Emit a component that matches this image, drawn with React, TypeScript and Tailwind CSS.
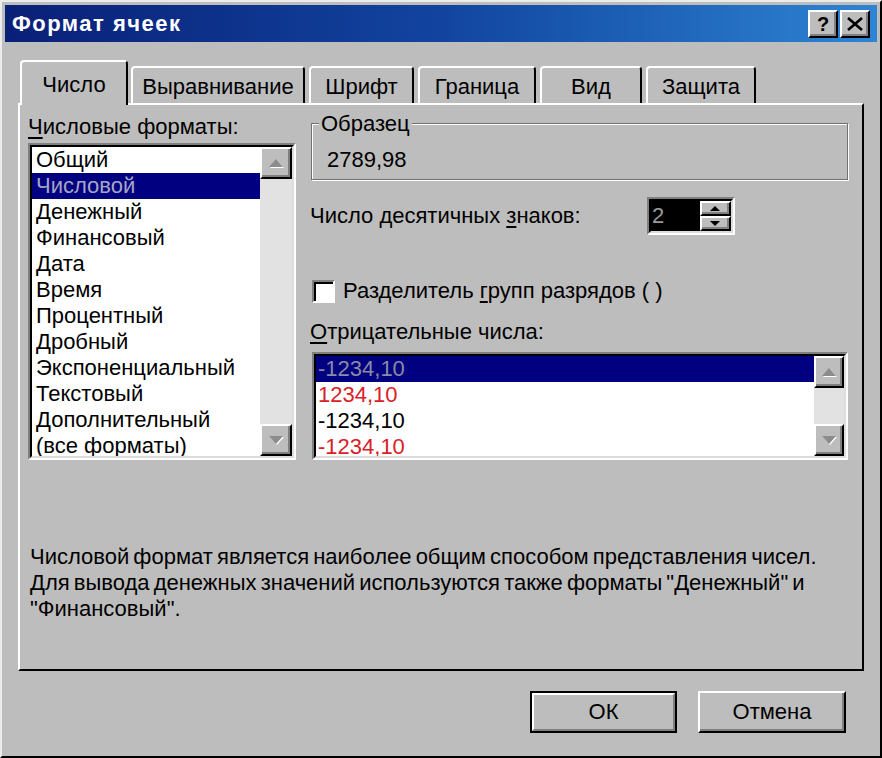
import type { ReactNode } from "react";

const raised =
  "border-2 border-t-white border-l-white border-r-black border-b-black shadow-[inset_-2px_-2px_0_#808080] bg-[#bdbdbd]";

const formats = [
  "Общий",
  "Числовой",
  "Денежный",
  "Финансовый",
  "Дата",
  "Время",
  "Процентный",
  "Дробный",
  "Экспоненциальный",
  "Текстовый",
  "Дополнительный",
  "(все форматы)",
];

const negatives = [
  { text: "-1234,10", color: "text-[#8a8aa6]", selected: true },
  { text: "1234,10", color: "text-[#d92128]" },
  { text: "-1234,10", color: "text-black" },
  { text: "-1234,10", color: "text-[#d92128]" },
];

function Arrow({ up, color = "#000", ghost = false, w = 14, h = 8 }: { up?: boolean; color?: string; ghost?: boolean; w?: number; h?: number }) {
  const pts = up ? `0,${h} ${w / 2},0 ${w},${h}` : `0,0 ${w / 2},${h} ${w},0`;
  const shadow = up ? `1,${h + 1} ${w / 2 + 1},1 ${w + 1},${h + 1}` : `1,1 ${w / 2 + 1},${h + 1} ${w + 1},1`;
  return (
    <svg width={w + 1} height={h + 1} viewBox={`0 0 ${w + 1} ${h + 1}`}>
      {ghost && <polygon points={shadow} fill="#fff" />}
      <polygon points={pts} fill={color} />
    </svg>
  );
}

function Scrollbar({ width }: { width: string }) {
  return (
    <div className={`flex flex-col ${width} bg-[#e2e2e2]`}>
      <div className={`${raised} h-[32px] flex items-center justify-center`}>
        <Arrow up color="#8c8c8c" ghost />
      </div>
      <div className="flex-1" />
      <div className={`${raised} h-[32px] flex items-center justify-center`}>
        <Arrow color="#8c8c8c" ghost />
      </div>
    </div>
  );
}

function Sunken({ className, children }: { className: string; children: ReactNode }) {
  return (
    <div className={`border-2 border-t-[#808080] border-l-[#808080] border-r-white border-b-white ${className}`}>
      <div className="h-full border-2 border-t-black border-l-black border-r-[#dcdcdc] border-b-[#dcdcdc] flex overflow-hidden">
        {children}
      </div>
    </div>
  );
}

function Tab({ label, w }: { label: string; w: string }) {
  return (
    <div
      className={`${w} h-[37px] border-t-2 border-l-2 border-r-2 border-t-white border-l-white border-r-black rounded-t-[4px] pt-[6px] text-center`}
    >
      {label}
    </div>
  );
}

export default function App() {
  return (
    <div className="w-[882px] h-[758px] overflow-hidden bg-[#bdbdbd] border-2 border-t-[#ececec] border-l-[#ececec] border-r-black border-b-black p-[3px] flex flex-col font-['Liberation_Sans',Arial,sans-serif] text-[22px] leading-[26px] text-black">
      {/* title bar */}
      <div className="h-[37px] shrink-0 flex items-center justify-between pl-[7px] pr-[7px] bg-gradient-to-r from-[#0a1f78] via-[#12449f] to-[#2f84d4]">
        <span className="font-bold text-white text-[22px] tracking-[1.5px]">Формат ячеек</span>
        <div className="flex gap-[2px]">
          <div className={`${raised} w-[30px] h-[28px] flex items-center justify-center font-bold text-[20px] leading-none`}>?</div>
          <div className={`${raised} w-[30px] h-[28px] flex items-center justify-center`}>
            <svg width="16" height="14" viewBox="0 0 16 14">
              <path d="M1 1 L15 13 M15 1 L1 13" stroke="#000" strokeWidth="2.6" />
            </svg>
          </div>
        </div>
      </div>

      <div className="px-[13px] flex flex-col">
        {/* tabs */}
        <div className="mt-[18px] pl-[2px] h-[43px] flex items-end">
          <div className="relative z-10 -mb-[2px] w-[108px] h-[45px] bg-[#bdbdbd] border-t-2 border-l-2 border-r-2 border-t-white border-l-white border-r-black rounded-t-[4px] pt-[10px] text-center">
            Число
          </div>
          <div className="flex gap-[4px] ml-[3px]">
            <Tab label="Выравнивание" w="w-[174px]" />
            <Tab label="Шрифт" w="w-[105px]" />
            <Tab label="Граница" w="w-[118px]" />
            <Tab label="Вид" w="w-[102px]" />
            <Tab label="Защита" w="w-[110px]" />
          </div>
        </div>

        {/* panel */}
        <div className="h-[568px] border-2 border-t-white border-l-white border-r-black border-b-black flex flex-col">
          <div className="flex pl-[8px] pt-[9px]">
            {/* left column */}
            <div className="w-[268px] flex flex-col">
              <div className="h-[26px]">
                <span className="underline underline-offset-[3px]">Ч</span>исловые форматы:
              </div>
              <Sunken className="mt-[3px] h-[317px]">
                <div className="flex-1 bg-white flex flex-col">
                  {formats.map((f, i) => (
                    <div
                      key={f}
                      className={`h-[26px] shrink-0 pl-[4px] ${i === 1 ? "bg-[#000080] text-[#a6a6c4]" : ""}`}
                    >
                      {f}
                    </div>
                  ))}
                </div>
                <Scrollbar width="w-[32px]" />
              </Sunken>
            </div>

            {/* right column */}
            <div className="ml-[14px] w-[540px] flex flex-col">
              <div className="relative mt-[9px] ml-[1px] w-[537px] h-[57px] border border-[#707070] shadow-[inset_1px_1px_0_#fff,1px_1px_0_#fff] pl-[15px] pt-[23px]">
                <span className="absolute -top-[13px] left-[7px] px-[2px] bg-[#bdbdbd]">Образец</span>
                2789,98
              </div>

              <div className="mt-[17px] h-[38px] flex items-center">
                <div className="w-[337px]">
                  Число десятичных <span className="underline underline-offset-[3px]">з</span>наков:
                </div>
                <Sunken className="w-[88px] h-[38px]">
                  <div className="flex-1 bg-black text-[#9a9a9a] pl-[1px] leading-[30px]">2</div>
                  <div className="w-[31px] flex flex-col">
                    <div className={`${raised} h-[15px] flex items-center justify-center`}>
                      <Arrow up w={10} h={5} />
                    </div>
                    <div className={`${raised} h-[15px] flex items-center justify-center`}>
                      <Arrow w={10} h={5} />
                    </div>
                  </div>
                </Sunken>
              </div>

              <div className="mt-[43px] h-[26px] flex items-center">
                <div className="ml-[2px] w-[23px] h-[23px] bg-white border-2 border-t-[#808080] border-l-[#808080] border-r-white border-b-white shadow-[inset_2px_2px_0_#000]" />
                <span className="ml-[8px]">
                  Разделитель <span className="underline underline-offset-[3px]">г</span>рупп разрядов ( )
                </span>
              </div>

              <div className="mt-[15px] h-[26px]">
                <span className="underline underline-offset-[3px]">О</span>трицательные числа:
              </div>

              <Sunken className="mt-[7px] ml-[2px] w-[536px] h-[108px]">
                <div className="flex-1 bg-white flex flex-col">
                  {negatives.map((n, i) => (
                    <div
                      key={i}
                      className={`h-[26px] shrink-0 pl-[2px] ${n.color} ${n.selected ? "bg-[#000080]" : ""}`}
                    >
                      {n.text}
                    </div>
                  ))}
                </div>
                <Scrollbar width="w-[30px]" />
              </Sunken>
            </div>
          </div>

          <p className="mt-[84px] pl-[10px] [word-spacing:-2px]">
            Числовой формат является наиболее общим способом представления чисел.
            <br />
            Для вывода денежных значений используются также форматы "Денежный" и
            <br />
            "Финансовый".
          </p>
        </div>

        {/* buttons */}
        <div className="mt-[20px] flex justify-end gap-[21px] pr-[18px]">
          <div className="w-[147px] h-[42px] border-2 border-black">
            <div className="h-full border-2 border-t-white border-l-white border-r-[#808080] border-b-[#808080] flex items-center justify-center">
              ОК
            </div>
          </div>
          <div className={`${raised} w-[148px] h-[42px] flex items-center justify-center`}>Отмена</div>
        </div>
      </div>
    </div>
  );
}
